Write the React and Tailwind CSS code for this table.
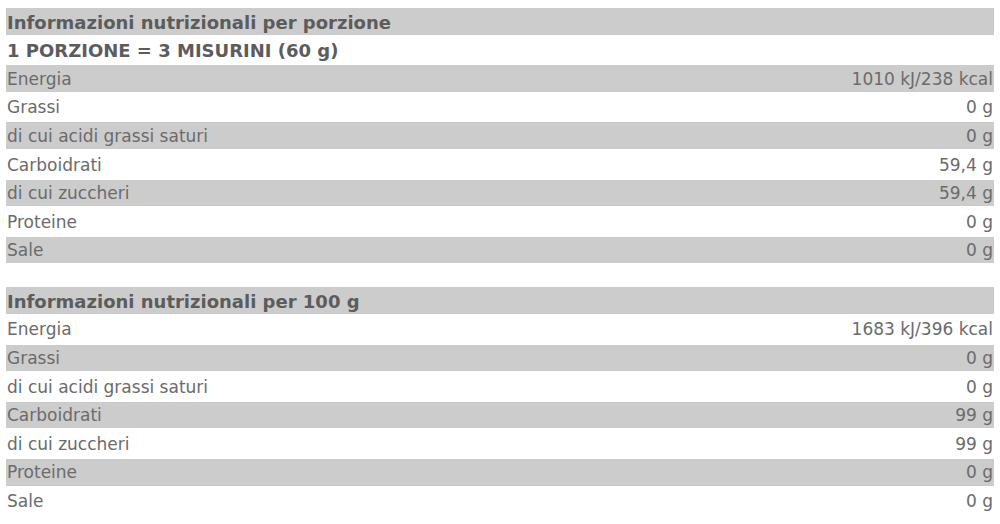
import React from "react";

const perServing = [
  ["Energia", "1010 kJ/238 kcal"],
  ["Grassi", "0 g"],
  ["di cui acidi grassi saturi", "0 g"],
  ["Carboidrati", "59,4 g"],
  ["di cui zuccheri", "59,4 g"],
  ["Proteine", "0 g"],
  ["Sale", "0 g"],
];

const per100 = [
  ["Energia", "1683 kJ/396 kcal"],
  ["Grassi", "0 g"],
  ["di cui acidi grassi saturi", "0 g"],
  ["Carboidrati", "99 g"],
  ["di cui zuccheri", "99 g"],
  ["Proteine", "0 g"],
  ["Sale", "0 g"],
];

const Row = ({ label, value, shaded }) => (
  <div
    className={`flex h-[26.6px] items-center justify-between px-px pt-[2px] ${
      shaded ? "bg-[#cccccc]" : "bg-white"
    }`}
  >
    <span>{label}</span>
    <span>{value}</span>
  </div>
);

const Table = ({ title, subtitle, rows }) => {
  // shading alternates starting with the title row
  const offset = subtitle ? 2 : 1;
  return (
    <div className="flex flex-col gap-[2px]">
      <div className="flex h-[26.6px] items-center bg-[#cccccc] px-px pt-[2px] text-[18px] font-bold text-[#5c5c5c]">
        {title}
      </div>
      {subtitle && (
        <div className="flex h-[26.6px] items-center px-px pt-[2px] text-[18px] font-bold text-[#5c5c5c]">
          {subtitle}
        </div>
      )}
      {rows.map(([label, value], i) => (
        <Row key={label} label={label} value={value} shaded={(i + offset) % 2 === 0} />
      ))}
    </div>
  );
};

export default function App() {
  return (
    <div className="min-h-screen bg-white px-[6px] pt-[8px] font-['DejaVu_Sans',sans-serif] text-[17px] text-[#6b6b6b]">
      <Table
        title="Informazioni nutrizionali per porzione"
        subtitle="1 PORZIONE = 3 MISURINI (60 g)"
        rows={perServing}
      />
      <div className="h-[24px]" />
      <Table title="Informazioni nutrizionali per 100 g" rows={per100} />
    </div>
  );
}
